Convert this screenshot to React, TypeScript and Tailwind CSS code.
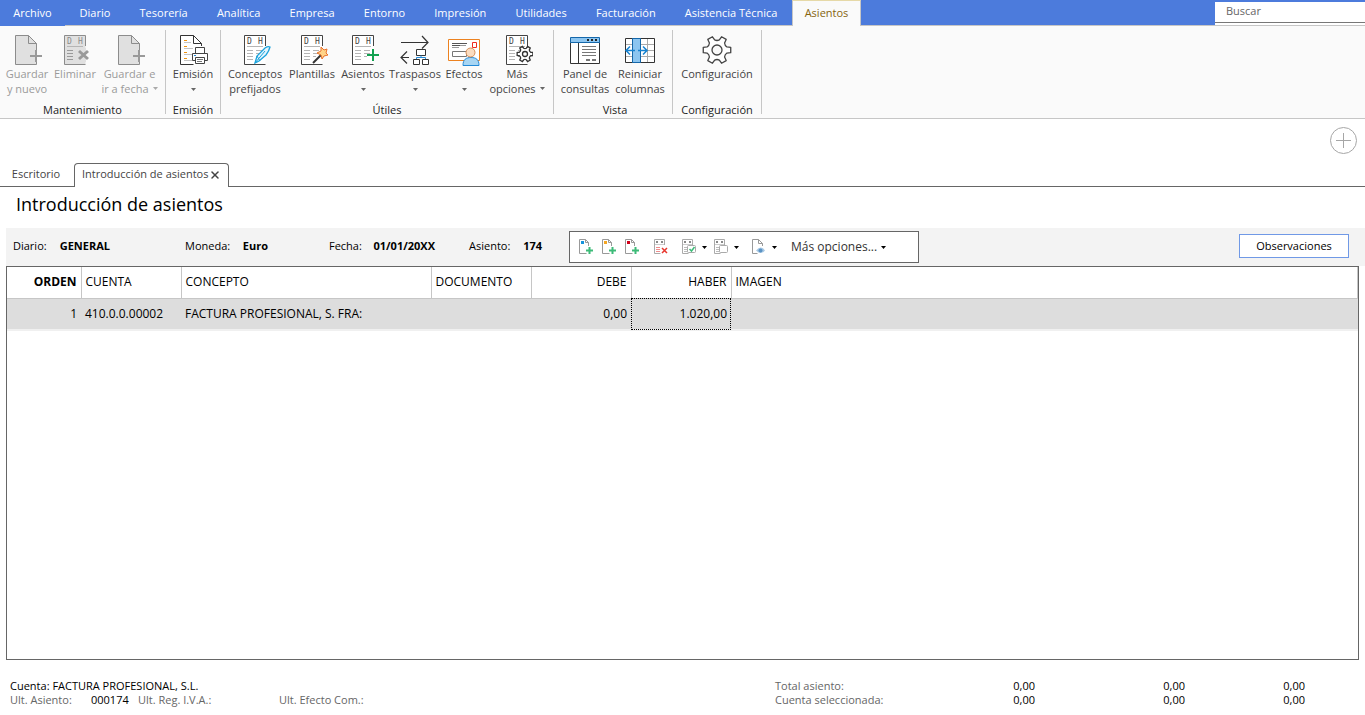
import type { ReactNode } from "react";
import { X } from "lucide-react";

const menus = [
  "Diario",
  "Tesorería",
  "Analítica",
  "Empresa",
  "Entorno",
  "Impresión",
  "Utilidades",
  "Facturación",
  "Asistencia Técnica",
];

function Svg({ children }: { children: ReactNode }) {
  return (
    <svg width="32" height="32" viewBox="0 0 32 32" fill="none" className="shrink-0" aria-hidden="true">
      {children}
    </svg>
  );
}

function NewDocIcon() {
  return (
    <Svg>
      <path d="M4.5 1.5h13l8 8v21h-21z" fill="#e0e0e0" />
      <path d="M25.5 16V9.5l-8-8h-13v29h21v-5M17.5 1.5v8h8" stroke="#8c8c8c" />
      <path d="M25 16v12M19 22h12" stroke="#999" strokeWidth="2" />
    </Svg>
  );
}

function Sheet({ disabled, children }: { disabled?: boolean; children?: ReactNode }) {
  const line = disabled ? "#8c8c8c" : "#444";
  return (
    <Svg>
      <path d="M5.5 1.5h21v29h-21z" fill={disabled ? "#e0e0e0" : "#fff"} />
      <path d="M26.5 12V1.5h-21v29h21" stroke={line} />
      <text x="8" y="10" fontSize="8" fontFamily="DejaVu Sans Mono, monospace" fill={line}>D</text>
      <text x="19" y="10" fontSize="8" fontFamily="DejaVu Sans Mono, monospace" fill={line}>H</text>
      <path d="M8 12.5h16" stroke="#b5b5b5" />
      <path d="M8 16.5h6M8 19.5h6M8 22.5h6M8 25.5h6M17 16.5h6M17 19.5h6M17 22.5h3" stroke={disabled ? "#9a9a9a" : "#b5b5b5"} />
      {children}
    </Svg>
  );
}

function DeleteIcon() {
  return (
    <Sheet disabled>
      <path d="M17 14h13v14H17z" fill="#e0e0e0" />
      <path d="M27 13h5v15h-5z" fill="#fafafa" />
      <path d="m20 17 9 8m0-8-9 8" stroke="#999" strokeWidth="3" />
    </Sheet>
  );
}

function PrintIcon() {
  return (
    <Svg>
      <path d="M3.5 1.5h13l8 8v21h-21z" fill="#fff" />
      <path d="M24.5 12V9.5l-8-8h-13v29h13M16.5 1.5v8h8" stroke="#333" />
      <path d="M7 6.5h3M7 12.5h3M7 18.5h3M7 24.5h3" stroke="#f0930f" />
      <path d="M7 8.5h7M7 14.5h9M7 20.5h8M7 26.5h8" stroke="#c4c4c4" />
      <path d="M18.5 13.5h9v6h-9zM15.5 19.5h15v7h-15z" fill="#fff" stroke="#444" />
      <path d="M18.5 23.5h9v6h-9z" fill="#fff" stroke="#444" />
      <path d="M20 25.5h6M20 27.5h5" stroke="#777" />
      <path d="M17 21.5h2" stroke="#2389d7" />
    </Svg>
  );
}

function ConceptIcon() {
  return (
    <Sheet>
      <path d="m16 29 2-7 8-8q3-2 5-1-1 4-4 8l-7 6z" fill="#e3f5fd" stroke="#1ba3dc" strokeWidth="1.3" />
      <path d="m16 29 10-12M18 22l3 5" stroke="#1ba3dc" />
    </Sheet>
  );
}

function WandIcon() {
  return (
    <Sheet>
      <path d="m17 29 9-9" stroke="#333" strokeWidth="2" />
      <path d="m25 13 3 3 3-1-1 4 2 2-4 1-2 3-1-4-4-2 4-2z" fill="#ffd488" stroke="#e9712b" />
    </Sheet>
  );
}

function AddEntryIcon() {
  return (
    <Sheet>
      <path d="M26 15v12M20 21h12" stroke="#12a150" strokeWidth="2" />
    </Sheet>
  );
}

function TransferIcon() {
  return (
    <Svg>
      <path d="M2 8.5h27M23 2l6 6.5-6 6M10 23.500H2M8 17.5l-6 6 6 6" stroke="#333" strokeWidth="1.2" />
      <path d="M17.5 15.5h9v6h-9zM14.5 25.5h6v5h-6zM23.5 25.5h6v5h-6z" fill="#fff" stroke="#333" />
      <path d="M22 21.5v2M17.5 25v-1.500h9V25" stroke="#2389d7" />
    </Svg>
  );
}

function EffectsIcon() {
  return (
    <Svg>
      <path d="M.5 5.5h31v21H.5z" fill="#fff" stroke="#ec8220" />
      <path d="M4 9.5h15M4 11.500h8" stroke="#555" />
      <path d="M12 11.500h6M4 13.500h7" stroke="#999" />
      <path d="M4.5 17.5h14v5h-14z" stroke="#777" />
      <path d="M24.5 8.5h4v5h-4z" fill="#fff" stroke="#ee2b24" />
      <path d="M15 31.5c0-6 3-8 8-8s8 2 8 8z" fill="#a7d5f3" stroke="#2389d7" />
      <circle cx="22.5" cy="18.5" r="4.5" fill="#fbdcc0" stroke="#d58d57" />
    </Svg>
  );
}

// six teeth, two of them level with the hub
function gear(cx: number, cy: number, r: number) {
  const at = (deg: number, radius: number) => {
    const a = (deg * Math.PI) / 180;
    return `${(cx + radius * Math.cos(a)).toFixed(2)} ${(cy + radius * Math.sin(a)).toFixed(2)}`;
  };
  const teeth = [0, 60, 120, 180, 240, 300].map(
    (a) =>
      `${at(a - 17, r * 0.74)}L${at(a - 11, r)}L${at(a + 11, r)}L${at(a + 17, r * 0.74)}Q${at(a + 30, r * 0.64)} `
  );
  return `M${teeth.join("")}${at(343, r * 0.74)}Z`;
}

function SheetGearIcon() {
  return (
    <Sheet>
      <path d={gear(24, 20, 8)} fill="#fff" stroke="#333" strokeWidth="1.3" />
      <circle cx="24" cy="20" r="2.5" stroke="#333" strokeWidth="1.3" />
    </Sheet>
  );
}

function PanelIcon() {
  return (
    <Svg>
      <path d="M1.5 8.5h29v21h-29z" fill="#fff" stroke="#333" />
      <path d="M1.5 3.5h29v5h-29z" fill="#8cc5f0" stroke="#1467aa" />
      <path d="M18 6h2M22 6h2M26 6h2" stroke="#222" strokeWidth="2" />
      <path d="M9.5 9v21" stroke="#333" />
      <path d="M13 12.5h14M13 15.5h14M13 18.5h14M13 21.5h14" stroke="#777" />
      <path d="M17 26h4M23 26h4" stroke="#777" strokeWidth="2" />
    </Svg>
  );
}

function ColumnsIcon() {
  return (
    <Svg>
      <path d="M1.5 4.5h29v24h-29z" fill="#fff" stroke="#333" />
      <path d="M2 10.5h28M2 16.5h28M2 22.5h28M23.5 5v23" stroke="#aaa" />
      <path d="M8.5 4.5h8v24h-8z" fill="#8cc5f0" stroke="#1467aa" />
      <path d="M11 16.5H2M6 12.5l-4 4 4 4M14 16.5h9M19 12.5l4 4-4 4" stroke="#1682d0" strokeWidth="1.5" />
    </Svg>
  );
}

function GearIcon() {
  return (
    <Svg>
      <path d={gear(16, 16, 14)} fill="#fff" stroke="#444" strokeWidth="1.3" strokeLinejoin="round" />
      <circle cx="16" cy="16" r="5" fill="#fafafa" stroke="#444" strokeWidth="1.3" />
    </Svg>
  );
}

function Caret({ className = "" }: { className?: string }) {
  return (
    <svg width="5" height="3" viewBox="0 0 5 3" className={`inline-block shrink-0 ${className}`} aria-hidden="true">
      <path d="M0 0h5L2.5 3z" fill="currentColor" />
    </svg>
  );
}

type ToolProps = {
  icon: ReactNode;
  lines: string[];
  width: string;
  caret?: "inline" | "below";
  disabled?: boolean;
};

function Tool({ icon, lines, width, caret, disabled }: ToolProps) {
  return (
    <button
      type="button"
      disabled={disabled}
      className={`flex shrink-0 flex-col items-center whitespace-nowrap leading-[15px] ${width} ${disabled ? "text-[#9a9a9a]" : "text-[#444]"}`}
    >
      {icon}
      <span>{lines[0]}</span>
      {lines[1] && (
        <span className="flex items-center gap-1">
          {lines[1]}
          {caret === "inline" && <Caret className={disabled ? "text-[#aaa]" : "text-[#666]"} />}
        </span>
      )}
      {caret === "below" && <Caret className="mt-[7px] text-[#666]" />}
    </button>
  );
}

function Group({ label, className, children }: { label: string; className: string; children: ReactNode }) {
  return (
    <section className={`flex shrink-0 flex-col border-r border-[#c6c6c6] ${className}`}>
      <div className="flex h-[74px] shrink-0 pt-1">{children}</div>
      <h2 className="text-center leading-3 text-[#222]">{label}</h2>
    </section>
  );
}

function SmallDoc({ color }: { color: string }) {
  return (
    <svg width="16" height="16" viewBox="0 0 16 16" fill="none" aria-hidden="true">
      <path d="M10.5 7V3.5l-3-3H1.5v14h7M7.5.5v3h3" stroke="#999" />
      <path d="M3 2h3v3H3z" fill={color} />
      <path d="M11.5 8v7M8 11.5h7" stroke="#3dbb78" strokeWidth="2" />
    </svg>
  );
}

function SmallSheet({ kind }: { kind: "delete" | "check" | "blank" }) {
  const mark = kind === "delete" ? "#ee8c8c" : "#bbb";
  return (
    <svg width="16" height="16" viewBox="0 0 16 16" fill="none" aria-hidden="true">
      <path d="M11.500 6V.5h-10v14h6" stroke="#aaa" />
      <path d="M3 3h2M8 3h2" stroke="#888" strokeWidth="2" />
      <path d="M2 5.500h9" stroke="#ccc" />
      <path d="M3 8.5h4M3 10.5h4M3 12.5h4" stroke={mark} />
      {kind === "delete" && <path d="m9 9 5 5m0-5-5 5" stroke="#e8372e" strokeWidth="1.5" />}
      {kind !== "delete" && <rect x="6.5" y="6.5" width="8" height="7" rx="1" fill="#fff" stroke="#aaa" />}
      {kind === "check" && <path d="m8.5 10 2 2 3-4" stroke="#3dbb78" strokeWidth="1.5" />}
    </svg>
  );
}

function SmallEye() {
  return (
    <svg width="16" height="16" viewBox="0 0 16 16" fill="none" aria-hidden="true">
      <path d="M11.5 7V4.5l-4-4h-6v14h5M7.5.5v4h4" stroke="#999" />
      <path d="M5 11.5q5-6 9 0-4 5-9 0Z" fill="#a9c9e4" />
      <circle cx="9.5" cy="11.5" r="2" fill="#5b93c4" />
    </svg>
  );
}

function IconButton({ label, className = "", caret, children }: { label: string; className?: string; caret?: boolean; children: ReactNode }) {
  return (
    <button type="button" aria-label={label} className={`flex items-center gap-[5px] ${className}`}>
      {children}
      {caret && <Caret className="text-black" />}
    </button>
  );
}

function Field({ label, value, className = "" }: { label: string; value: string; className?: string }) {
  return (
    <div className={`flex shrink-0 justify-between pb-[2px] ${className}`}>
      <span>{label}</span>
      <b className="font-bold">{value}</b>
    </div>
  );
}

export default function App() {
  return (
    <div className="flex min-h-screen flex-col bg-white font-['Open_Sans','Noto_Sans',sans-serif] text-[11px] text-black">
      <nav className="flex h-[26px] whitespace-nowrap bg-[#4c7bdc] text-white">
        <button type="button" className="w-[65px] pt-px">Archivo</button>
        <div className="flex flex-1 border-b border-[#c6c6c6]">
          <div className="flex w-[727px] pt-[2px]">
            {menus.map((menu) => (
              <button key={menu} type="button" className="flex-auto">{menu}</button>
            ))}
          </div>
          <button type="button" className="-mb-px w-[69px] border-x border-t border-x-[#c6c6c6] border-t-[#e6d9a8] bg-[#fafafa] text-[#86640f]">
            Asientos
          </button>
          <div className="ml-auto w-[150px] bg-white pb-[2px]">
            <input
              aria-label="Buscar"
              placeholder="Buscar"
              className="h-full w-full border-t-2 border-b border-t-[#4c7bdc] border-b-[#777] px-[11px] pb-[3px] outline-none placeholder:text-[#666]"
            />
          </div>
        </div>
      </nav>

      <header className="flex h-[93px] border-b border-[#c6c6c6] bg-[#fafafa] pt-1 pb-1">
        <Group label="Mantenimiento" className="w-[166px]">
          <Tool icon={<NewDocIcon />} lines={["Guardar", "y nuevo"]} width="w-[54px]" disabled />
          <Tool icon={<DeleteIcon />} lines={["Eliminar"]} width="w-[42px]" disabled />
          <Tool icon={<NewDocIcon />} lines={["Guardar e", "ir a fecha"]} width="w-[67px]" caret="inline" disabled />
        </Group>
        <Group label="Emisión" className="w-[55px]">
          <Tool icon={<PrintIcon />} lines={["Emisión"]} width="w-[54px]" caret="below" />
        </Group>
        <Group label="Útiles" className="w-[333px]">
          <Tool icon={<ConceptIcon />} lines={["Conceptos", "prefijados"]} width="w-[68px]" />
          <Tool icon={<WandIcon />} lines={["Plantillas"]} width="w-[46px]" />
          <Tool icon={<AddEntryIcon />} lines={["Asientos"]} width="w-[56px]" caret="below" />
          <Tool icon={<TransferIcon />} lines={["Traspasos"]} width="w-[48px]" caret="below" />
          <Tool icon={<EffectsIcon />} lines={["Efectos"]} width="w-[50px]" caret="below" />
          <Tool icon={<SheetGearIcon />} lines={["Más", "opciones"]} width="w-[56px]" caret="inline" />
        </Group>
        <Group label="Vista" className="w-[119px] pl-1">
          <Tool icon={<PanelIcon />} lines={["Panel de", "consultas"]} width="w-[54px]" />
          <Tool icon={<ColumnsIcon />} lines={["Reiniciar", "columnas"]} width="w-[56px]" />
        </Group>
        <Group label="Configuración" className="w-[89px]">
          <Tool icon={<GearIcon />} lines={["Configuración"]} width="w-[88px]" />
        </Group>
      </header>

      <div className="flex justify-end px-2 pt-2">
        <button type="button" aria-label="Añadir" className="text-[#a6a6a6]">
          <svg width="27" height="27" viewBox="0 0 27 27" fill="none" stroke="currentColor" aria-hidden="true">
            <circle cx="13.5" cy="13.5" r="13" />
            <path d="M13.5 6v15M6 13.5h15" />
          </svg>
        </button>
      </div>

      <div className="mt-[9px] flex h-6 whitespace-nowrap text-[#444]">
        <button type="button" className="w-[74px] border-b border-[#666] pr-[2px]">Escritorio</button>
        <div className="flex w-[155px] items-center justify-between rounded-t-[4px] border-x border-t border-[#666] px-[7px] pb-[2px]">
          <button type="button">Introducción de asientos</button>
          <button type="button" aria-label="Cerrar">
            <X size={12} strokeWidth={3} />
          </button>
        </div>
        <div className="flex-1 border-b border-[#666]" />
      </div>

      <main className="flex flex-1 flex-col pl-[6px]">
        <h1 className="pt-1 pb-[10px] pl-[10px] text-[18px] leading-[27px]">Introducción de asientos</h1>

        <div className="flex h-[38px] items-center whitespace-nowrap bg-[#f3f3f3] pr-4 pl-[7px]">
          <Field label="Diario:" value="GENERAL" className="w-[97px]" />
          <Field label="Moneda:" value="Euro" className="ml-[75px] w-[83px]" />
          <Field label="Fecha:" value="01/01/20XX" className="ml-[61px] w-[106px]" />
          <Field label="Asiento:" value="174" className="ml-[34px] w-[73px]" />
          <div className="ml-[27px] flex h-8 w-[350px] shrink-0 items-center border border-[#666] bg-white pl-2 text-[#333]">
            <IconButton label="Nuevo asiento"><SmallDoc color="#1593dc" /></IconButton>
            <IconButton label="Insertar asiento" className="ml-[7px]"><SmallDoc color="#f5a623" /></IconButton>
            <IconButton label="Duplicar asiento" className="ml-[7px]"><SmallDoc color="#d0021b" /></IconButton>
            <IconButton label="Eliminar línea" className="ml-[13px]"><SmallSheet kind="delete" /></IconButton>
            <IconButton label="Marcar" className="ml-3" caret><SmallSheet kind="check" /></IconButton>
            <IconButton label="Desmarcar" className="ml-[6px]" caret><SmallSheet kind="blank" /></IconButton>
            <IconButton label="Ver documento" className="ml-3" caret><SmallEye /></IconButton>
            <button type="button" className="ml-[14px] flex items-center gap-1 text-[12px]">
              Más opciones...
              <Caret className="text-black" />
            </button>
          </div>
          <div className="ml-auto pb-[2px]">
            <button type="button" className="block h-6 w-[110px] border border-[#7099e6] bg-white">Observaciones</button>
          </div>
        </div>

        <div className="mr-[6px] flex-1 border border-[#666]">
          <table className="w-full table-fixed border-collapse whitespace-nowrap text-[12px]">
            <colgroup>
              <col className="w-[74px]" />
              <col className="w-[100px]" />
              <col className="w-[250px]" />
              <col className="w-[100px]" />
              <col className="w-[100px]" />
              <col className="w-[100px]" />
              <col />
            </colgroup>
            <thead>
              <tr className="h-[31px] border-b border-[#c6c6c6] text-left [&>th]:border-r [&>th]:border-[#c6c6c6] [&>th]:px-1 [&>th]:font-normal">
                <th className="text-right"><b>ORDEN</b></th>
                <th>CUENTA</th>
                <th>CONCEPTO</th>
                <th>DOCUMENTO</th>
                <th className="text-right">DEBE</th>
                <th className="text-right">HABER</th>
                <th>IMAGEN</th>
              </tr>
            </thead>
            <tbody>
              <tr className="h-8 border-b-2 border-[#f0f0f0] bg-[#ddd] [&>td]:px-1">
                <td className="text-right">1</td>
                <td>410.0.0.00002</td>
                <td>FACTURA PROFESIONAL, S. FRA:</td>
                <td />
                <td className="text-right">0,00</td>
                <td className="text-right outline-1 -outline-offset-1 outline-dotted outline-black">1.020,00</td>
                <td />
              </tr>
            </tbody>
          </table>
        </div>

        <footer className="flex h-[55px] items-center whitespace-nowrap pt-[11px] pl-1 leading-[14px] text-[#666]">
          <div className="w-[765px]">
            <p className="text-black">Cuenta: FACTURA PROFESIONAL, S.L.</p>
            <p className="flex">
              <span className="w-[81px]">Ult. Asiento:</span>
              <span className="w-[47px] text-black">000174</span>
              <span className="w-[141px]">Ult. Reg. I.V.A.:</span>
              <span>Ult. Efecto Com.:</span>
            </p>
          </div>
          <div className="grid grid-cols-[110px_150px_150px_120px] text-right text-black">
            <span className="text-left text-[#666]">Total asiento:</span>
            <span>0,00</span>
            <span>0,00</span>
            <span>0,00</span>
            <span className="text-left text-[#666]">Cuenta seleccionada:</span>
            <span>0,00</span>
            <span>0,00</span>
            <span>0,00</span>
          </div>
        </footer>
      </main>
    </div>
  );
}
